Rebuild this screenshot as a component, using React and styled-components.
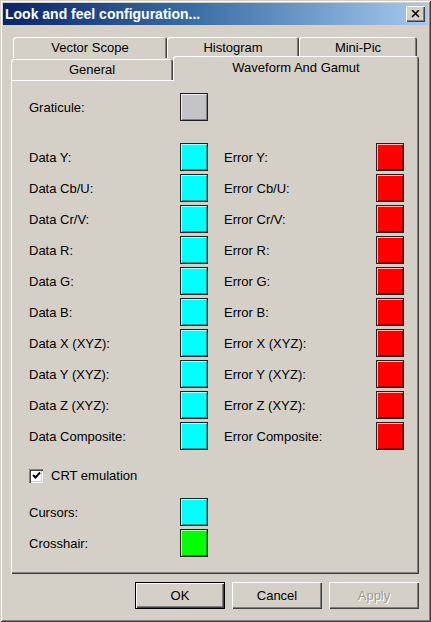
import styled, { createGlobalStyle } from "styled-components";

const Global = createGlobalStyle`
	html, body {
		margin: 0;
		padding: 0;
		background: #d4d0c8;
	}
	* {
		box-sizing: border-box;
	}
`;

const Window = styled.div`
	width: 431px;
	height: 622px;
	background: #d4d0c8;
	padding: 3px;
	display: flex;
	flex-direction: column;
	font-family: "Liberation Sans", Arial, sans-serif;
	font-size: 13px;
	color: #000;
	box-shadow: inset 1px 1px 0 #d4d0c8, inset -1px -1px 0 #404040,
		inset 2px 2px 0 #ffffff, inset -2px -2px 0 #808080;
`;

const TitleBar = styled.div`
	height: 22px;
	display: flex;
	align-items: center;
	justify-content: space-between;
	padding: 0 3px 0 2px;
	background: linear-gradient(to right, #0a246a 0%, #3a6ea5 45%, #a6caf0 100%);
`;

const Title = styled.span`
	color: #fff;
	font-weight: bold;
	font-size: 14px;
`;

const CloseButton = styled.button`
	width: 19px;
	height: 16px;
	padding: 0;
	border: none;
	background: #d4d0c8;
	display: flex;
	align-items: center;
	justify-content: center;
	box-shadow: inset 1px 1px 0 #ffffff, inset -1px -1px 0 #404040,
		inset -2px -2px 0 #808080;
`;

const Body = styled.div`
	flex: 1;
	display: flex;
	flex-direction: column;
	padding: 12px 9px 10px 8px;
`;

const TabRow = styled.div`
	display: flex;
	height: ${(p) => p.$height}px;
	padding-left: ${(p) => p.$indent}px;
	align-items: flex-end;
	position: relative;
	z-index: ${(p) => p.$z};
`;

const Tab = styled.div`
	width: ${(p) => p.$width}px;
	height: ${(p) => (p.$active ? 25 : 21)}px;
	margin-bottom: ${(p) => (p.$active ? -1 : 0)}px;
	display: flex;
	align-items: center;
	justify-content: center;
	padding-bottom: ${(p) => (p.$active ? 3 : 0)}px;
	background: #d4d0c8;
	border-radius: 3px 3px 0 0;
	box-shadow: inset 1px 1px 0 #ffffff, inset -1px 0 0 #404040,
		inset -2px 0 0 #808080;
`;

const Panel = styled.div`
	flex: 1;
	display: flex;
	flex-direction: column;
	padding: 13px 0 0 18px;
	box-shadow: inset 1px 1px 0 #ffffff, inset -1px -1px 0 #404040,
		inset -2px -2px 0 #808080;
`;

const Row = styled.div`
	display: flex;
	align-items: center;
	height: 28px;
	margin-top: ${(p) => p.$top || 0}px;
`;

const Pair = styled.div`
	display: flex;
	align-items: center;
	margin-right: 16px;
`;

const Label = styled.span`
	width: ${(p) => p.$width}px;
	white-space: nowrap;
`;

const Swatch = styled.div`
	width: 28px;
	height: 28px;
	background: ${(p) => p.$color};
	border: 1px solid #202020;
	box-shadow: inset 1px 1px 0 rgba(255, 255, 255, 0.7),
		inset -1px -1px 0 rgba(0, 0, 0, 0.35);
`;

const CheckRow = styled.label`
	display: flex;
	align-items: center;
	gap: 8px;
	margin-top: 18px;
	height: 15px;
`;

const CheckBox = styled.span`
	width: 14px;
	height: 14px;
	background: #fff;
	display: flex;
	align-items: center;
	justify-content: center;
	box-shadow: inset 1px 1px 0 #808080, inset 2px 2px 0 #404040,
		inset -1px -1px 0 #ffffff, inset -2px -2px 0 #d4d0c8;
`;

const Buttons = styled.div`
	display: flex;
	justify-content: flex-end;
	gap: 7px;
	margin-top: 8px;
`;

const Button = styled.button`
	width: 90px;
	height: 27px;
	font-family: "Liberation Sans", Arial, sans-serif;
	font-size: 13px;
	background: #d4d0c8;
	border: ${(p) => (p.$default ? "1px solid #000" : "none")};
	color: ${(p) => (p.$disabled ? "#a09c94" : "#000")};
	text-shadow: ${(p) => (p.$disabled ? "1px 1px 0 #fff" : "none")};
	box-shadow: inset 1px 1px 0 #ffffff, inset -1px -1px 0 #404040,
		inset -2px -2px 0 #808080;
	padding: 0;
`;

const rows = [
	["Data Y:", "Error Y:"],
	["Data Cb/U:", "Error Cb/U:"],
	["Data Cr/V:", "Error Cr/V:"],
	["Data R:", "Error R:"],
	["Data G:", "Error G:"],
	["Data B:", "Error B:"],
	["Data X (XYZ):", "Error X (XYZ):"],
	["Data Y (XYZ):", "Error Y (XYZ):"],
	["Data Z (XYZ):", "Error Z (XYZ):"],
	["Data Composite:", "Error Composite:"],
];

const App = () => {
	return (
		<>
			<Global />
			<Window>
				<TitleBar>
					<Title>Look and feel configuration...</Title>
					<CloseButton>
						<svg width="9" height="8" viewBox="0 0 9 8">
							<path d="M1 0 L8 7 M8 0 L1 7" stroke="#000" strokeWidth="1.6" />
						</svg>
					</CloseButton>
				</TitleBar>
				<Body>
					<TabRow $height={21} $indent={2} $z={0}>
						<Tab $width={154}>Vector Scope</Tab>
						<Tab $width={132}>Histogram</Tab>
						<Tab $width={118}>Mini-Pic</Tab>
					</TabRow>
					<TabRow $height={22} $indent={0} $z={2}>
						<Tab $width={162}>General</Tab>
						<Tab $width={246} $active>
							Waveform And Gamut
						</Tab>
					</TabRow>
					<Panel>
						<Row>
							<Label $width={151}>Graticule:</Label>
							<Swatch $color="#c4c4c8" />
						</Row>
						{rows.map(([a, b], i) => (
							<Row key={a} $top={i === 0 ? 22 : 3}>
								<Pair>
									<Label $width={151}>{a}</Label>
									<Swatch $color="#00ffff" />
								</Pair>
								<Pair>
									<Label $width={152}>{b}</Label>
									<Swatch $color="#ff0000" />
								</Pair>
							</Row>
						))}
						<CheckRow>
							<CheckBox>
								<svg width="9" height="9" viewBox="0 0 9 9">
									<path
										d="M1 4 L3.5 6.5 L8 1.5"
										fill="none"
										stroke="#000"
										strokeWidth="2"
									/>
								</svg>
							</CheckBox>
							CRT emulation
						</CheckRow>
						<Row $top={15}>
							<Label $width={151}>Cursors:</Label>
							<Swatch $color="#00ffff" />
						</Row>
						<Row $top={3}>
							<Label $width={151}>Crosshair:</Label>
							<Swatch $color="#00ff00" />
						</Row>
					</Panel>
					<Buttons>
						<Button $default>OK</Button>
						<Button>Cancel</Button>
						<Button $disabled>Apply</Button>
					</Buttons>
				</Body>
			</Window>
		</>
	);
};

export default App;
